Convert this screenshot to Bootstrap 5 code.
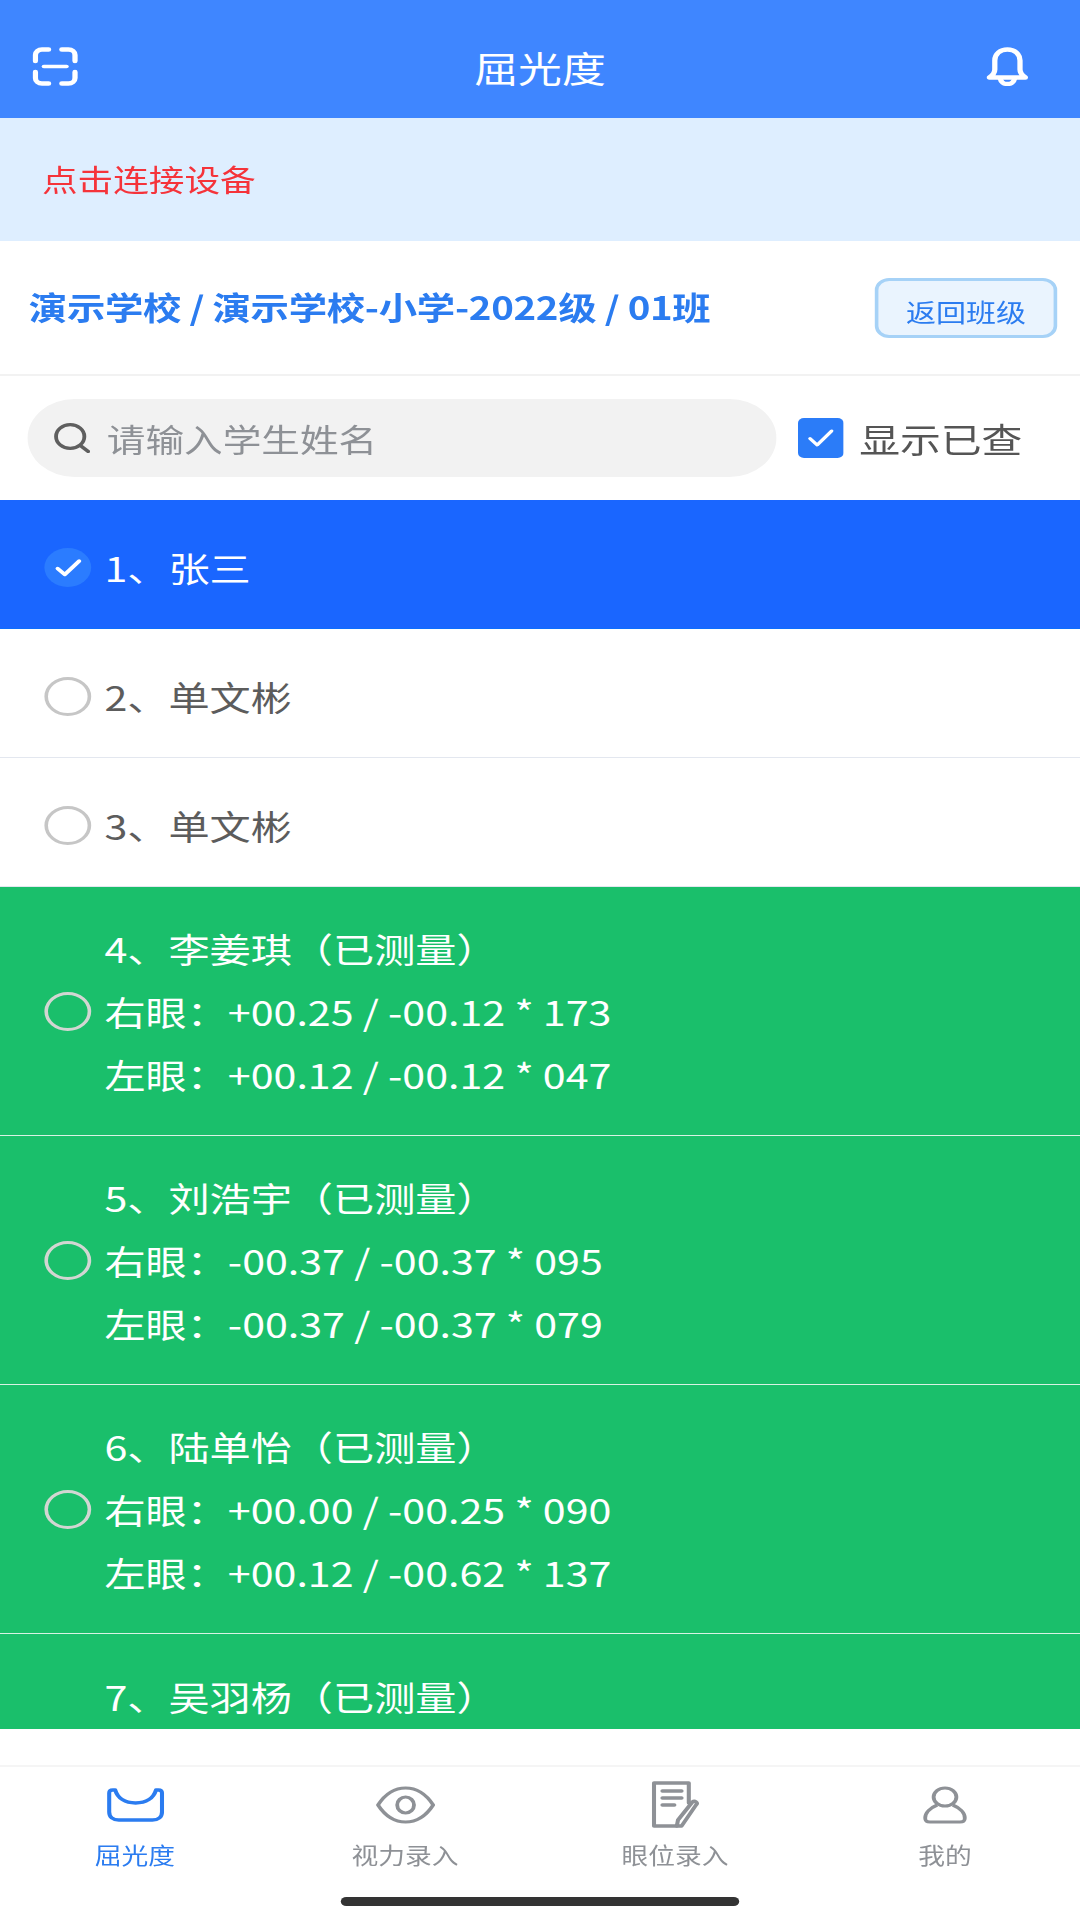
<!DOCTYPE html>
<html lang="zh-CN">
<head>
  <meta charset="UTF-8" />
  <meta name="viewport" content="width=device-width, initial-scale=1.0"/>
  <title>屈光度</title>
  <link href="https://cdn.jsdelivr.net/npm/bootstrap@5.3.2/dist/css/bootstrap.min.css" rel="stylesheet">
  <style>
    /* the reference is a 900 wide screen stretched 1.2x sideways */
    html, body { overflow: hidden; background: #fff; }
    body { width: 1080px; height: 1920px; font-family: "Noto Sans CJK SC", "Noto Sans", sans-serif; }
    .app { width: 900px; height: 1920px; transform: scaleX(1.2); transform-origin: 0 0; }

    .top-bar { height: 118px; padding: 47px 43px 0 27px; background: #3f86ff; color: #fff; }
    .top-bar .side { width: 70px; }
    .top-bar .side.left { width: 86px; }
    .top-bar h1 { font-size: 36.5px; font-weight: 400; line-height: 42px; margin: 0; }

    .device-bar { height: 123px; padding-left: 35px; background: #deeeff; color: #f5333a; font-size: 29.7px; }

    .class-bar { height: 135px; padding: 0 19px 0 24px; border-bottom: 2px solid #f2f2f2; }
    .class-bar .path { margin-top: -4px; color: #2b7cf0; font-size: 32px; font-weight: 700; letter-spacing: -.26px; }
    .btn-back { width: 152px; height: 60px; padding: 7px 0 0; border: 3px solid #a6d2f7; border-radius: 12px;
      background: #eaf4fe; color: #2b7cf0; font-size: 25px; line-height: 46px; }

    .search-bar { height: 124px; padding: 0 23px; gap: 18px; }
    .search-box { width: 624px; height: 78px; padding-left: 22px; border-radius: 39px; background: #f2f2f2; }
    .search-box input { padding: 0 0 0 14px; border: 0; background: transparent; box-shadow: none; font-size: 32.2px; }
    .search-box input::placeholder { color: #8e9196; opacity: 1; }
    .show-checked { gap: 13px; margin: 0; padding: 0; min-height: 0; color: #555; font-size: 34px; line-height: 46px; }
    .show-checked span { margin-top: 2px; }
    .show-checked .form-check-input { float: none; width: 38px; height: 40px; margin: 0; border: 0; border-radius: 5px; background-color: #2b7cf8;
      background-size: 100% 100%;
      background-image: url("data:image/svg+xml,%3csvg xmlns='http://www.w3.org/2000/svg' viewBox='0 0 38 40'%3e%3cpath fill='none' stroke='%23fff' stroke-width='3' stroke-linecap='round' stroke-linejoin='round' d='M10 20.500l6 6.500 12-14'/%3e%3c/svg%3e"); }

    .students { height: 1229px; overflow: hidden; }
    .student { flex: none; gap: 11px; padding: 7px 20px 0 37px; border: 0; border-bottom: 1px solid #e3e7ef; border-radius: 0;
      color: #5c5c5c; font-size: 34.3px; line-height: 63px; height: 129px; }
    .student.active { background: #1a66ff; color: #fff; margin: 0; }
    .student.done { height: 249px; padding: 30.500px 20px 29.500px 37px; background: #1abf6b; color: #fff; border-bottom-color: #d8f2e4; }
    .pick { flex: none; width: 39px; height: 39px; border: 3px solid #c6c6c6; border-radius: 50%; }
    .active .pick { display: flex; align-items: center; justify-content: center; border: 0; background: #2b7cff; }
    .done .pick { border-color: #d2d6d2; }

    .tab-bar { height: 155px; margin-top: 36px; border-top: 2px solid #f5f5f5; }
    .tab { color: #8e9196; font-size: 22.300px; line-height: 24px; }
    .tab.active { color: #2b7cf0; }
    .tab .ico { height: 75px; }
    .home-line { width: 332px; height: 9px; margin: 31px auto 0; border-radius: 5px; background: #333; }
  </style>
</head>
<body>
<div class="app d-flex flex-column">

  <header class="top-bar d-flex justify-content-between align-items-start">
    <div class="side left">
      <svg width="38" height="39" viewBox="0 0 38 39" fill="none" stroke="#fff" stroke-width="4.400" stroke-linecap="round">
        <path d="M13.500 2.500H8a5.500 5.500 0 0 0-5.500 5.500v6"/>
        <path d="M24.500 2.500H30a5.500 5.500 0 0 1 5.500 5.500v6"/>
        <path d="M13.500 36.500H8A5.500 5.500 0 0 1 2.500 31v-6"/>
        <path d="M24.500 36.500H30a5.500 5.500 0 0 0 5.500-5.500v-6"/>
        <path d="M9.500 19.500h19" stroke-width="3.600"/>
      </svg>
    </div>
    <h1>屈光度</h1>
    <div class="side d-flex justify-content-end">
      <svg width="35" height="39" viewBox="0 0 35 39" fill="none" stroke="#fff" stroke-width="4.400" stroke-linecap="round" stroke-linejoin="round">
        <path d="M2.500 30.500h30c-3-2.500-4.500-5-4.500-8V13.500C28 7 23.500 2.500 17.500 2.500S7 7 7 13.500V22.500c0 3-1.500 5.500-4.500 8z"/>
        <path d="M11.500 31.500c.5 3.500 3 5.500 6 5.500s5.500-2 6-5.500"/>
      </svg>
    </div>
  </header>

  <div class="device-bar d-flex align-items-center">点击连接设备</div>

  <div class="class-bar d-flex justify-content-between align-items-center">
    <div class="path">演示学校 / 演示学校-小学-2022级 / 01班</div>
    <button type="button" class="btn btn-back">返回班级</button>
  </div>

  <div class="search-bar d-flex align-items-center">
    <div class="search-box d-flex align-items-center">
      <svg width="30" height="30" viewBox="0 0 30 30" fill="none" stroke="#5f5f5f" stroke-width="3.200" stroke-linecap="round" class="flex-shrink-0">
        <ellipse cx="13.500" cy="13.500" rx="11.800" ry="11.800"/>
        <path d="M22.500 23l6 5.500"/>
      </svg>
      <input class="form-control" type="text" placeholder="请输入学生姓名">
    </div>
    <label class="form-check show-checked d-flex align-items-center">
      <input class="form-check-input" type="checkbox" checked>
      <span>显示已查</span>
    </label>
  </div>

  <div class="students list-group list-group-flush">
    <div class="student list-group-item active d-flex align-items-center">
      <span class="pick">
        <svg width="24" height="20" viewBox="0 0 24 20" fill="none" stroke="#fff" stroke-width="3.400" stroke-linecap="round" stroke-linejoin="round"><path d="M3 10.500l6 6L21 3"/></svg>
      </span>
      <div>1、张三</div>
    </div>
    <div class="student list-group-item d-flex align-items-center">
      <span class="pick"></span>
      <div>2、单文彬</div>
    </div>
    <div class="student list-group-item d-flex align-items-center">
      <span class="pick"></span>
      <div>3、单文彬</div>
    </div>
    <div class="student list-group-item done d-flex align-items-center">
      <span class="pick"></span>
      <div>
        <div>4、李姜琪（已测量）</div>
        <div>右眼：+00.25 / -00.12 * 173</div>
        <div>左眼：+00.12 / -00.12 * 047</div>
      </div>
    </div>
    <div class="student list-group-item done d-flex align-items-center">
      <span class="pick"></span>
      <div>
        <div>5、刘浩宇（已测量）</div>
        <div>右眼：-00.37 / -00.37 * 095</div>
        <div>左眼：-00.37 / -00.37 * 079</div>
      </div>
    </div>
    <div class="student list-group-item done d-flex align-items-center">
      <span class="pick"></span>
      <div>
        <div>6、陆单怡（已测量）</div>
        <div>右眼：+00.00 / -00.25 * 090</div>
        <div>左眼：+00.12 / -00.62 * 137</div>
      </div>
    </div>
    <div class="student list-group-item done d-flex align-items-center">
      <span class="pick"></span>
      <div class="align-self-start">7、吴羽杨（已测量）</div>
    </div>
  </div>

  <nav class="tab-bar">
    <div class="row g-0 text-center">
      <div class="col-3 tab active">
        <div class="ico d-flex align-items-center justify-content-center">
          <svg width="48" height="34" viewBox="0 0 48 34" fill="none" stroke="#2b7cf0" stroke-width="3.400" stroke-linecap="round" stroke-linejoin="round">
            <path d="M7 2C9 10 15 15 24 15S39 10 41 2h2c2 0 3 1 3 3v19c0 5-3 8-8 8H10c-5 0-8-3-8-8V5c0-2 1-3 3-3z"/>
          </svg>
        </div>
        <div>屈光度</div>
      </div>
      <div class="col-3 tab">
        <div class="ico d-flex align-items-center justify-content-center">
          <svg width="50" height="38" viewBox="0 0 50 38" fill="none" stroke="#8e9196" stroke-width="3.200" stroke-linejoin="round">
            <path d="M2 19C8 8 16 2 25 2s17 6 23 17c-6 11-14 17-23 17S8 30 2 19z"/>
            <ellipse cx="25" cy="19" rx="7" ry="8"/>
          </svg>
        </div>
        <div>视力录入</div>
      </div>
      <div class="col-3 tab">
        <div class="ico d-flex align-items-center justify-content-center">
          <svg width="40" height="47" viewBox="0 0 40 47" fill="none" stroke="#8e9196" stroke-width="3.400" stroke-linecap="round" stroke-linejoin="round">
            <path d="M31 22V2H2v43h19"/>
            <path d="M9 10h16M9 17h16M9 24h10"/>
            <path d="M25 45l-4 0 1-6 12-18c1-1 2-1 3 0s1 2 0 3L25 45z"/>
          </svg>
        </div>
        <div>眼位录入</div>
      </div>
      <div class="col-3 tab">
        <div class="ico d-flex align-items-center justify-content-center">
          <svg width="37" height="38" viewBox="0 0 37 38" fill="none" stroke="#8e9196" stroke-width="3.200" stroke-linejoin="round">
            <ellipse cx="18.500" cy="11" rx="9.500" ry="9"/>
            <path d="M12 19C6 22 2 27 2 32c0 3 1 4 4 4h25c3 0 4-1 4-4 0-5-4-10-10-13"/>
          </svg>
        </div>
        <div>我的</div>
      </div>
    </div>
    <div class="home-line"></div>
  </nav>

</div>
<script src="https://cdn.jsdelivr.net/npm/bootstrap@5.3.2/dist/js/bootstrap.bundle.min.js"></script>
</body>
</html>
